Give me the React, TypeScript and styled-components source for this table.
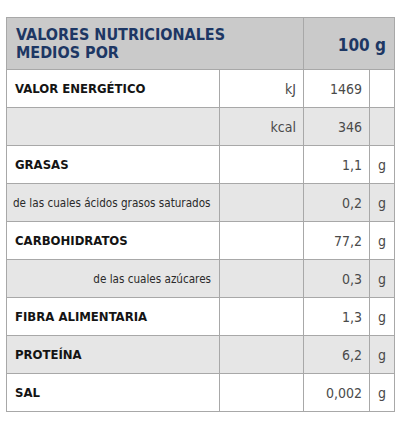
import styled, { createGlobalStyle } from "styled-components";

const GlobalStyle = createGlobalStyle`
    body {
        margin: 0;
        background: #ffffff;
        font-family: "Liberation Sans Narrow", "DejaVu Sans Condensed", "Liberation Sans", sans-serif;
    }
`

type Row = {
    label: string,
    value: string,
    unit?: string,
    energy?: string,
    bold?: boolean,
    align?: "left" | "right",
    shaded?: boolean
}

const rows: Row[] = [
    { label: "VALOR ENERGÉTICO", energy: "kJ", value: "1469", bold: true },
    { label: "", energy: "kcal", value: "346", shaded: true },
    { label: "GRASAS", value: "1,1", unit: "g", bold: true },
    { label: "de las cuales ácidos grasos saturados", value: "0,2", unit: "g", shaded: true },
    { label: "CARBOHIDRATOS", value: "77,2", unit: "g", bold: true },
    { label: "de las cuales azúcares", value: "0,3", unit: "g", align: "right", shaded: true },
    { label: "FIBRA ALIMENTARIA", value: "1,3", unit: "g", bold: true },
    { label: "PROTEÍNA", value: "6,2", unit: "g", bold: true, shaded: true },
    { label: "SAL", value: "0,002", unit: "g", bold: true },
]

const Page = styled.div`
    padding: 17px 6px 0 6px;
`

const Table = styled.table`
    width: 388px;
    border-collapse: collapse;
    table-layout: fixed;
    color: #141414;
`

const HeadCell = styled.th<{ $right?: boolean }>`
    background-color: #cacaca;
    border: 1px solid #a8a8a8;
    height: 52px;
    padding: ${p => p.$right ? "2px 8px 0 0" : "0 0 0 9px"};
    text-align: ${p => p.$right ? "right" : "left"};
    color: #1d3764;
    font-weight: 700;
    font-size: ${p => p.$right ? "17px" : "16px"};
    line-height: 18px;
    vertical-align: middle;
    box-sizing: border-box;
`

const BodyRow = styled.tr<{ $shaded?: boolean }>`
    background-color: ${p => p.$shaded ? "#e6e6e6" : "#ffffff"};
    height: 38px;
`

const LabelCell = styled.td<{ $bold?: boolean, $align?: "left" | "right" }>`
    border: 1px solid #a8a8a8;
    padding: 0 ${p => p.$align === "right" ? "8px" : "6px"} 0 ${p => p.$bold ? "8px" : "6px"};
    text-align: ${p => p.$align ?? "left"};
    font-weight: ${p => p.$bold ? 700 : 400};
    font-size: ${p => p.$bold ? "13px" : "11.6px"};
    color: ${p => p.$bold ? "#141414" : "#2a2a2a"};
    white-space: nowrap;
`

const NumCell = styled.td`
    border: 1px solid #a8a8a8;
    padding: 0 7px;
    text-align: right;
    font-size: 14px;
    color: #4a4a4a;
`

const UnitCell = styled.td`
    border: 1px solid #a8a8a8;
    text-align: center;
    font-size: 14px;
    color: #4a4a4a;
`

const App = () => {
    return (
        <Page>
            <GlobalStyle />
            <Table>
                <colgroup>
                    <col style={{ width: 213 }} />
                    <col style={{ width: 84 }} />
                    <col style={{ width: 66 }} />
                    <col style={{ width: 25 }} />
                </colgroup>
                <thead>
                    <tr>
                        <HeadCell colSpan={2}>VALORES NUTRICIONALES<br />MEDIOS POR</HeadCell>
                        <HeadCell colSpan={2} $right>100 g</HeadCell>
                    </tr>
                </thead>
                <tbody>
                    {rows.map((r, i) => (
                        <BodyRow key={i} $shaded={r.shaded}>
                            <LabelCell $bold={r.bold} $align={r.align}>{r.label}</LabelCell>
                            <NumCell>{r.energy ?? ""}</NumCell>
                            <NumCell>{r.value}</NumCell>
                            <UnitCell>{r.unit ?? ""}</UnitCell>
                        </BodyRow>
                    ))}
                </tbody>
            </Table>
        </Page>
    )
}

export default App;
